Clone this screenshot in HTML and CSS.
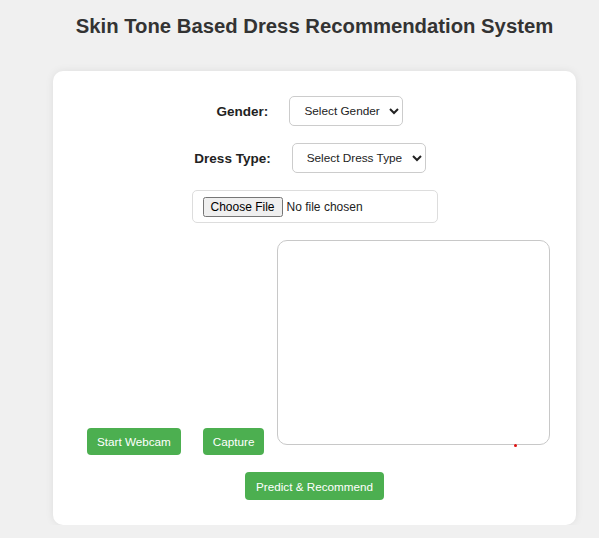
FILE: index.html
```html
<!DOCTYPE html>
<html>
<head>
<meta charset="utf-8">
<title>Skin Tone Based Dress Recommendation System</title>
<link rel="stylesheet" href="styles.css">
</head>
<body>
<div class="page">
  <h2 class="title">Skin Tone Based Dress Recommendation System</h2>
  <div class="card">
    <div class="field-row">
      <label class="field-label" for="gender">Gender:</label>
      <select id="gender" class="select select-gender">
        <option>Select Gender</option>
      </select>
    </div>
    <div class="field-row">
      <label class="field-label" for="dress">Dress Type:</label>
      <select id="dress" class="select select-dress">
        <option>Select Dress Type</option>
      </select>
    </div>
    <div class="file-row">
      <input type="file" class="file-input">
    </div>
    <div class="webcam-row">
      <button class="btn">Start Webcam</button>
      <button class="btn btn-capture">Capture</button>
      <div class="video-box"><span class="dot"></span></div>
    </div>
    <div class="predict-row">
      <button class="btn">Predict &amp; Recommend</button>
    </div>
  </div>
</div>
</body>
</html>
```

FILE: styles.css
```css
html, body {
  margin: 0;
  padding: 0;
  background: #f0f0f0;
  font-family: "Liberation Sans", Arial, sans-serif;
}

.page {
  width: 523px;
  margin-left: 53px;
  padding-top: 14px;
}

.title {
  margin: 0 0 33px 0;
  text-align: center;
  font-size: 20.3px;
  font-weight: bold;
  color: #333;
  white-space: nowrap;
  line-height: 24px;
}

.card {
  background: #fff;
  border-radius: 10px;
  box-shadow: 0 0 8px rgba(0, 0, 0, 0.08);
  padding: 25px 20px 25px;
  display: flex;
  flex-direction: column;
  gap: 17px;
}

.field-row {
  display: flex;
  justify-content: center;
  align-items: center;
  gap: 21px;
  padding-right: 9px;
}

.field-label {
  font-weight: bold;
  font-size: 13.5px;
  color: #222;
}

.select {
  height: 30px;
  font-family: "Liberation Sans", Arial, sans-serif;
  font-size: 11.8px;
  color: #222;
  background: #fff;
  border: 1px solid #ccc;
  border-radius: 5px;
  padding: 0 2px 0 10px;
}

.select-gender { width: 114px; }
.select-dress { width: 134px; }

.file-row {
  display: flex;
  justify-content: center;
}

.file-input {
  width: 246px;
  height: 33px;
  box-sizing: border-box;
  border: 1px solid #ddd;
  border-radius: 5px;
  padding: 6px 10px;
  font-family: "Liberation Sans", Arial, sans-serif;
  font-size: 12px;
  color: #222;
  background: #fff;
}

.webcam-row {
  display: flex;
  align-items: flex-end;
  padding-left: 14px;
}

.btn {
  background: #4caf50;
  color: #fff;
  border: none;
  border-radius: 4px;
  padding: 0 10px;
  height: 27px;
  font-family: "Liberation Sans", Arial, sans-serif;
  font-size: 11.7px;
  cursor: pointer;
}

.btn-capture {
  margin-left: 22px;
  margin-right: 13px;
}

.video-box {
  position: relative;
  width: 273px;
  height: 205px;
  box-sizing: border-box;
  border: 1.5px solid #c8c8c8;
  border-radius: 10px;
  margin-bottom: 10px;
  background: #fff;
}

.dot {
  position: absolute;
  left: 236px;
  bottom: -3px;
  width: 3px;
  height: 3px;
  border-radius: 50%;
  background: #e01010;
}

.predict-row {
  display: flex;
  justify-content: center;
}

.predict-row .btn {
  height: 28px;
  padding: 0 11px;
}
```
